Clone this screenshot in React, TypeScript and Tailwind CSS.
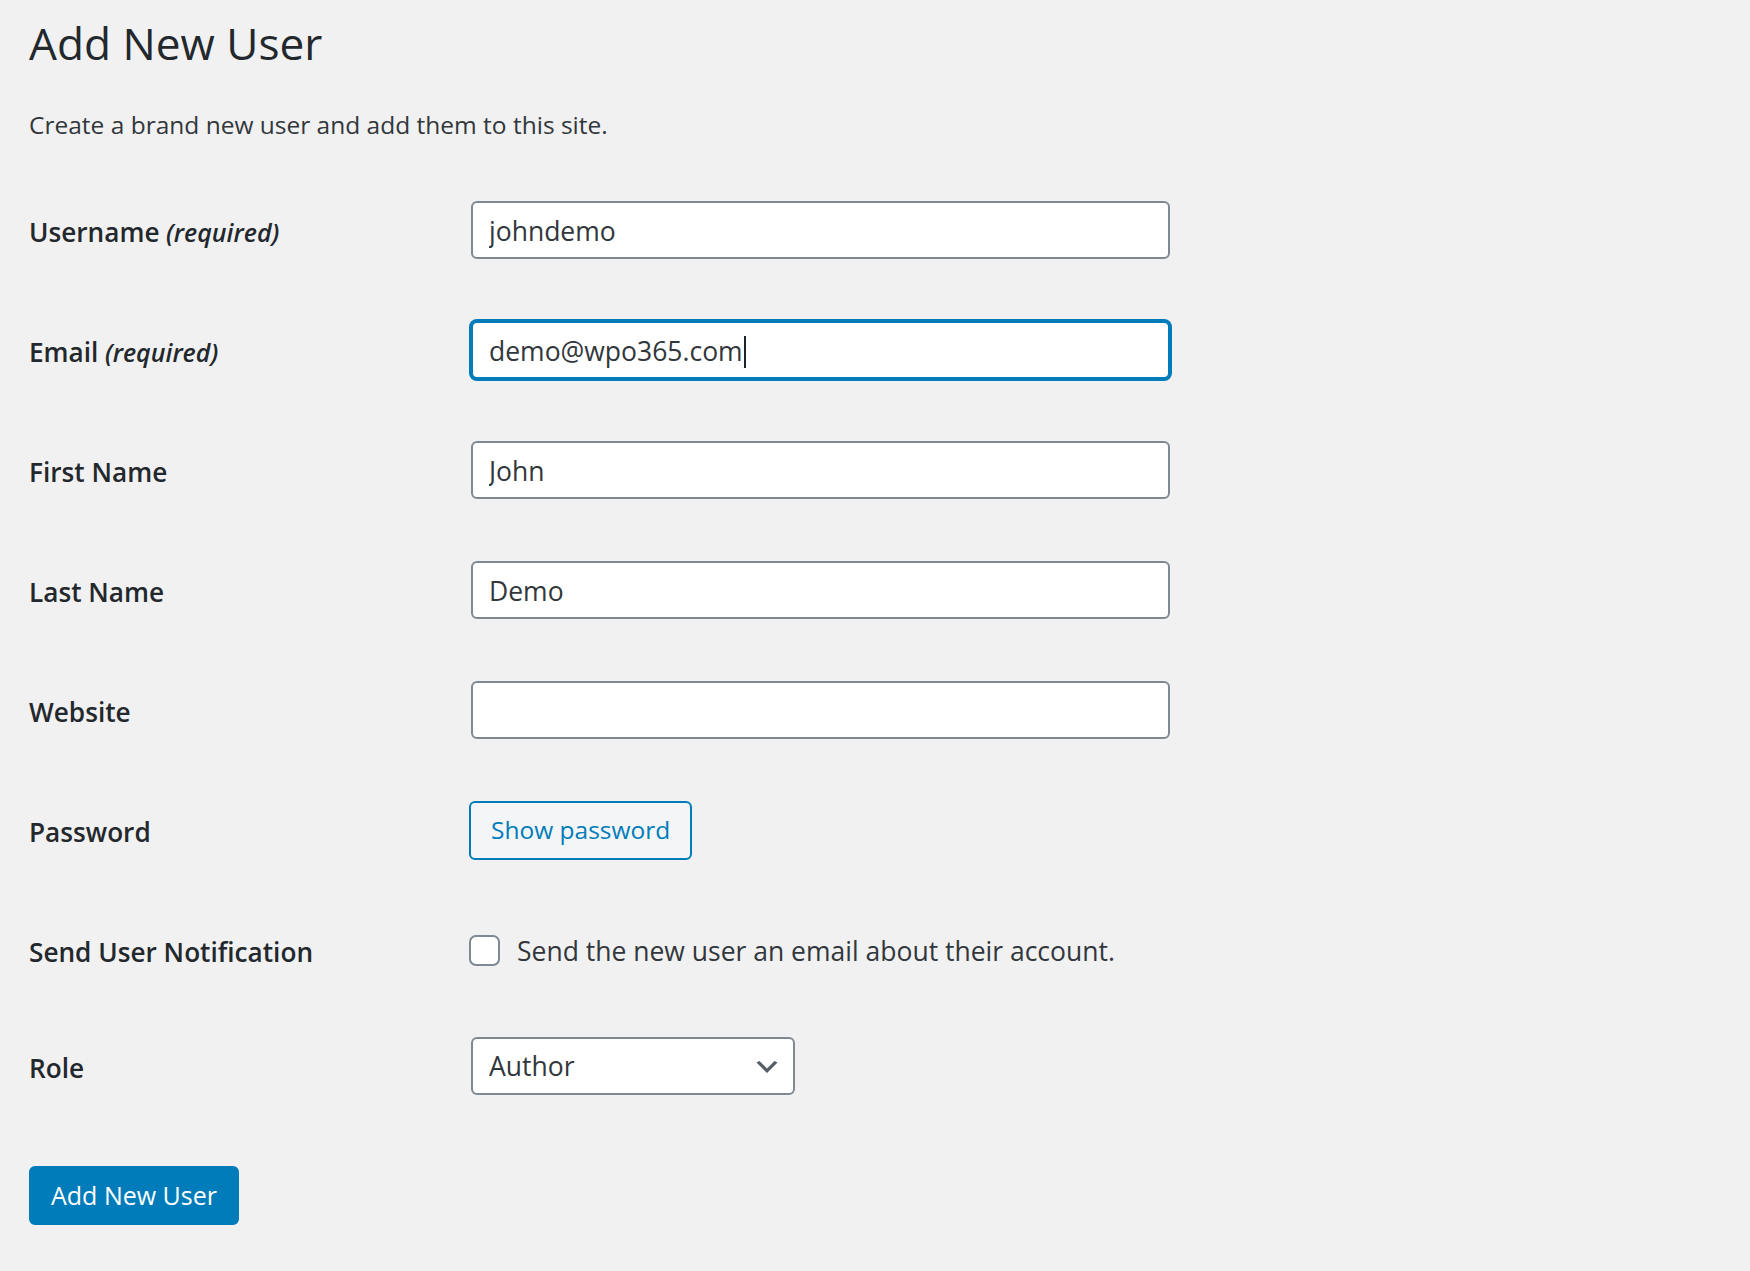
import React from 'react';

const font = "font-['Open_Sans','Noto_Sans',sans-serif]";

function Row({ label, required, children, className = '' }: { label: string; required?: boolean; children: React.ReactNode; className?: string }) {
  return (
    <div className={`flex items-center h-[58px] ${className}`}>
      <div className="w-[442px] shrink-0 pt-[5px] text-[26.2px] font-semibold text-[#23282d]">
        {label}
        {required && <em className="text-[25px] font-semibold"> (required)</em>}
      </div>
      {children}
    </div>
  );
}

const inputCls =
  'h-[58px] w-[699px] rounded-[6px] border-2 border-[#7e8993] bg-white px-[16px] pt-[2px] text-[26.5px] text-[#32373c] outline-none';

export default function App() {
  return (
    <div className={`min-h-screen bg-[#f1f1f1] pl-[29px] ${font}`}>
      <h1 className="pt-[15px] text-[44.2px] leading-[56px] font-normal text-[#23282d]">Add New User</h1>
      <p className="mt-[37px] text-[24.5px] leading-[34px] text-[#32373c]">
        Create a brand new user and add them to this site.
      </p>

      <form className="mt-[59px]" onSubmit={(e) => e.preventDefault()}>
        <Row label="Username" required>
          <input className={inputCls} defaultValue="johndemo" />
        </Row>

        <Row label="Email" required className="mt-[62px]">
          <div className="flex h-[58px] w-[699px] items-center rounded-[6px] border-2 border-[#007cba] bg-white px-[16px] pt-[3px] text-[26.5px] text-[#32373c] shadow-[0_0_0_2px_#007cba]">
            <span>demo@wpo365.com</span>
            <span className="ml-px h-[32px] w-[2px] bg-[#1d2327]" />
          </div>
        </Row>

        <Row label="First Name" className="mt-[62px]">
          <input className={inputCls} defaultValue="John" />
        </Row>

        <Row label="Last Name" className="mt-[62px]">
          <input className={inputCls} defaultValue="Demo" />
        </Row>

        <Row label="Website" className="mt-[62px]">
          <input className={inputCls} defaultValue="" />
        </Row>

        <Row label="Password" className="mt-[62px]">
          <button
            type="button"
            className="-ml-[2px] h-[59px] rounded-[6px] border-2 border-[#007cba] bg-[#f3f5f6] px-[20px] text-[24.5px] text-[#007cba]"
          >
            Show password
          </button>
        </Row>

        <Row label="Send User Notification" className="mt-[62px]">
          <label className="-ml-[2px] flex items-center gap-[17px] text-[26.5px] text-[#32373c]">
            <span className="h-[31px] w-[31px] rounded-[7px] border-2 border-[#7e8993] bg-white" />
            <span className="pt-[4px]">Send the new user an email about their account.</span>
          </label>
        </Row>

        <Row label="Role" className="mt-[58px]">
          <div className="relative">
            <select
              className="h-[58px] w-[324px] appearance-none rounded-[6px] border-2 border-[#7e8993] bg-white px-[16px] pt-[2px] text-[26.5px] text-[#32373c] outline-none"
              defaultValue="author"
            >
              <option value="subscriber">Subscriber</option>
              <option value="contributor">Contributor</option>
              <option value="author">Author</option>
              <option value="editor">Editor</option>
              <option value="administrator">Administrator</option>
            </select>
            <svg
              className="pointer-events-none absolute right-[13px] top-[15px] h-[30px] w-[30px]"
              viewBox="0 0 20 20"
            >
              <path d="M5 6l5 5 5-5 2 1-7 7-7-7 2-1z" fill="#555d66" />
            </svg>
          </div>
        </Row>

        <button
          type="submit"
          className="mt-[71px] h-[59px] rounded-[6px] border-2 border-[#007cba] bg-[#007cba] px-[20px] text-[25px] text-white"
        >
          Add New User
        </button>
      </form>
    </div>
  );
}
